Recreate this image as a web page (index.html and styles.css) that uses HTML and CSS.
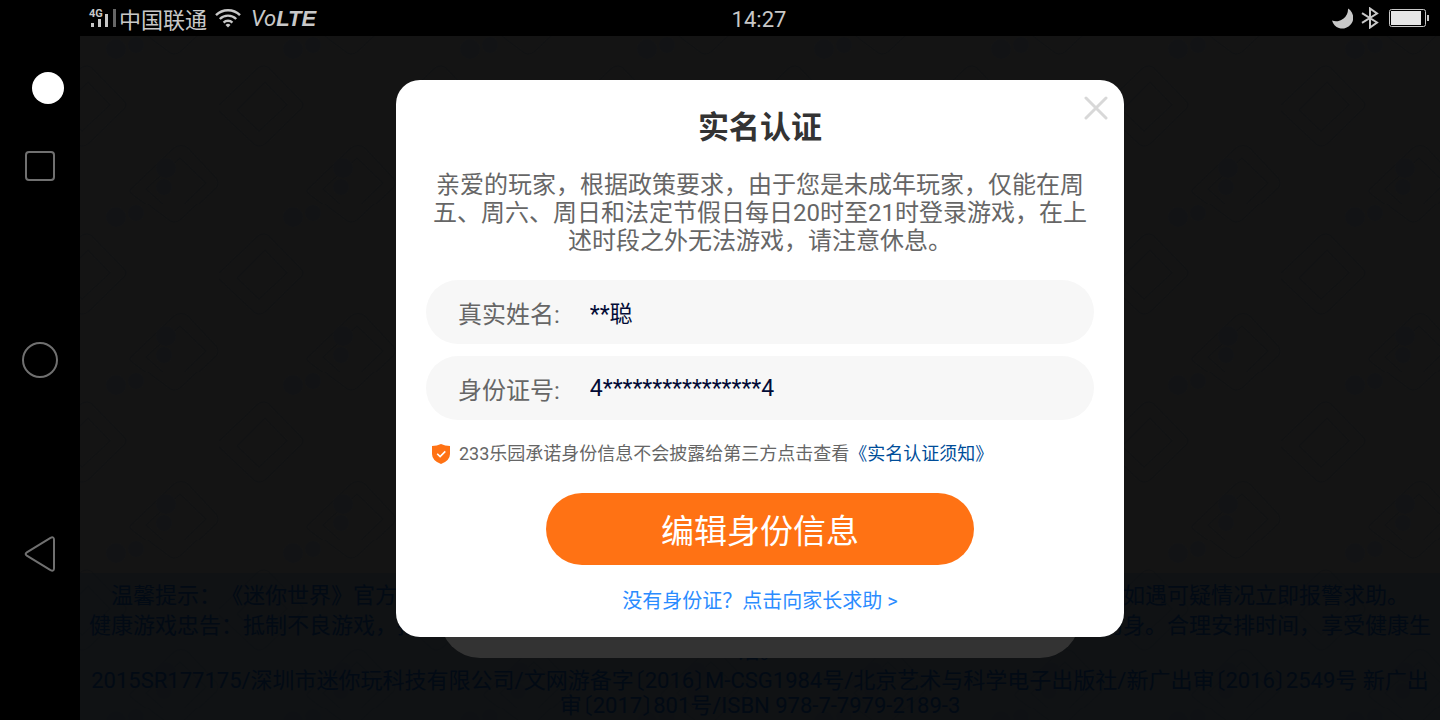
FILE: index.html
```html
<!DOCTYPE html>
<html lang="zh-CN">
<head>
<meta charset="utf-8">
<meta name="viewport" content="width=device-width, initial-scale=1">
<title>实名认证</title>
<link rel="stylesheet" href="styles.css">
</head>
<body>
<header class="status">
  <div class="status-left">
    <svg class="signal" width="30" height="22" viewBox="0 0 30 22" aria-hidden="true">
      <text class="signal-label" x="0" y="8">4G</text>
      <path d="M2 14h3v4H2zM9 10h3v8H9zM16 5h3v13h-3z" fill="#c8c8c8"/>
      <path d="M24 0h3v18h-3z" fill="#666"/>
    </svg>
    <span class="carrier">中国联通</span>
    <svg class="wifi" width="26" height="20" viewBox="0 0 26 20" aria-hidden="true">
      <g fill="none" stroke="#c8c8c8" stroke-width="2.4">
        <path d="M1 7.2a17 17 0 0 1 24 0"/>
        <path d="M4.8 11a11.6 11.6 0 0 1 16.4 0"/>
        <path d="M8.6 14.6a6.2 6.2 0 0 1 8.8 0"/>
      </g>
      <path d="M13 19.6l-2.5-2.6a3.6 3.6 0 0 1 5 0z" fill="#c8c8c8"/>
    </svg>
    <span class="volte">Vo<b>LTE</b></span>
  </div>
  <time class="clock">14:27</time>
  <div class="status-right">
    <svg width="22" height="22" viewBox="0 0 22 22" aria-hidden="true">
      <path d="M17 1.500A10.800 10.800 0 1 1 1 13.600 12 12 0 0 0 17 1.500z" fill="#c8c8c8"/>
    </svg>
    <svg width="18" height="22" viewBox="0 0 18 22" aria-hidden="true">
      <path d="M1 6.200l15 9.300-7 5V1.500l7 5L1 15.800" fill="none" stroke="#c8c8c8" stroke-width="2"/>
    </svg>
    <svg class="battery" width="40" height="18" viewBox="0 0 40 18" aria-hidden="true">
      <rect x=".5" y=".5" width="36" height="17" rx="2" fill="none" stroke="#c8c8c8"/>
      <path d="M2 2h30v14H2z" fill="#e6e6e6"/>
      <path d="M38 6h2v6h-2z" fill="#c8c8c8"/>
    </svg>
  </div>
</header>

<div class="screen">
  <nav class="keys" aria-label="系统导航">
    <span class="dot"></span>
    <button class="key key-recent" type="button" aria-label="最近任务">
      <svg width="36" height="36" viewBox="0 0 36 36"><rect x="4" y="4" width="28" height="28" rx="3"/></svg>
    </button>
    <button class="key key-home" type="button" aria-label="主屏幕">
      <svg width="36" height="36" viewBox="0 0 36 36"><circle cx="18" cy="18" r="17"/></svg>
    </button>
    <button class="key key-back" type="button" aria-label="返回">
      <svg width="36" height="36" viewBox="0 0 36 36"><path d="M4.800 16.400L28.500 1.800q3.500-1.600 3.500 2v28.400q0 3.600-3.500 2L4.800 19.600q-2.300-1.600 0-3.200z"/></svg>
    </button>
  </nav>

  <main class="stage">
    <svg class="pattern" aria-hidden="true">
      <defs>
        <pattern id="tiles" width="177" height="168" patternUnits="userSpaceOnUse">
          <g fill="none" stroke="#111213" stroke-width="1.500">
            <path d="M52 152l42-40q7-5 14 0l28 30q4 5 0 10l-36 34q-6 4-11 0l-37-28q-4-3 0-6z"/>
            <path d="M66 153l34-31 26 25-32 31z"/>
            <path d="M52 -16l42-40M52-12l37 28q5 4 11 0l36-34"/>
            <path d="M-38 69L1 32q6-4 11 0l32 33q4 4 0 8L8 108q-6 4-11 0l-35-33q-3-3 0-6z"/>
            <path d="M139 69l39-37q6-4 11 0M139 75l35 33q5 4 11 0"/>
            <path d="M-20 74L8 46l22 23L2 95z"/>
            <path d="M157 74l28-28M157 74l22 21"/>
          </g>
          <g fill="#121315">
            <circle cx="86" cy="132" r="10"/>
            <circle cx="84" cy="151" r="8"/>
            <circle cx="36" cy="13" r="10"/>
            <circle cx="56" cy="9" r="8"/>
          </g>
        </pattern>
      </defs>
      <rect width="100%" height="100%" fill="url(#tiles)"/>
    </svg>

    <footer class="notice">
      <p>温馨提示：《迷你世界》官方不会以任何形式要求玩家提供账号密码，也不会进行私下交易，谨防诈骗，如遇可疑情况立即报警求助。</p>
      <p>健康游戏忠告：抵制不良游戏，拒绝盗版游戏。注意自我保护，谨防受骗上当。适度游戏益脑，沉迷游戏伤身。合理安排时间，享受健康生活。</p>
      <p class="license">2015SR177175/深圳市迷你玩科技有限公司/文网游备字〔2016〕M-CSG1984号/北京艺术与科学电子出版社/新广出审〔2016〕2549号 新广出审〔2017〕801号/ISBN 978-7-7979-2189-3</p>
    </footer>

    <div class="overlay">
      <div class="under-card"></div>
      <form class="dialog" role="dialog" aria-labelledby="dialog-title">
        <button class="close" type="button" aria-label="关闭">
          <svg width="24" height="24" viewBox="0 0 24 24"><path d="M2 2l20 20M22 2L2 22"/></svg>
        </button>
        <h1 class="title" id="dialog-title">实名认证</h1>
        <p class="message">亲爱的玩家，根据政策要求，由于您是未成年玩家，仅能在周五、周六、周日和法定节假日每日20时至21时登录游戏，在上述时段之外无法游戏，请注意休息。</p>
        <div class="field">
          <label for="name">真实姓名:</label>
          <input id="name" type="text" value="**聪" readonly>
        </div>
        <div class="field">
          <label for="idno">身份证号:</label>
          <input id="idno" type="text" value="4****************4" readonly>
        </div>
        <p class="promise">
          <svg width="18" height="20" viewBox="0 0 18 20" aria-hidden="true">
            <path d="M9 0q4 1.800 9 2v8q0 6.500-9 10Q0 16.500 0 10V2q5-.2 9-2z" fill="#ff7214"/>
            <path d="M5.200 9.700l2.900 2.900 5.200-5.200" fill="none" stroke="#fff" stroke-width="1.600"/>
          </svg>
          <span>233乐园承诺身份信息不会披露给第三方点击查看<a href="#notice">《实名认证须知》</a></span>
        </p>
        <button class="submit" type="submit">编辑身份信息</button>
        <a class="help" href="#help">没有身份证？点击向家长求助 &gt;</a>
      </form>
    </div>
  </main>
</div>
</body>
</html>
```
FILE: styles.css
```css
* {
  box-sizing: border-box;
}

body {
  margin: 0;
  min-height: 100vh;
  display: flex;
  flex-direction: column;
  background: #000;
  font-family: Roboto, "Noto Sans CJK SC", sans-serif;
  text-spacing-trim: space-all;
}

h1,
p {
  margin: 0;
}

button,
input {
  font: inherit;
  border: 0;
  padding: 0;
  background: none;
}

a {
  text-decoration: none;
}

/* Status bar */
.status {
  display: grid;
  grid-template-columns: 1fr auto 1fr;
  align-items: center;
  height: 36px;
  padding: 0 11px 0 89px;
  color: #c8c8c8;
  font-size: 22px;
}

.status-left,
.status-right {
  display: flex;
  align-items: center;
}

.signal {
  margin-top: 4px;
  overflow: visible;
}

.signal-label {
  font: bold 11px Roboto, sans-serif;
  fill: #c8c8c8;
}

.wifi {
  margin-left: 8px;
}

.volte {
  margin-left: 10px;
  padding-top: 2px;
  font-style: italic;
}

.volte b {
  font-family: "Liberation Sans", sans-serif;
}

.clock {
  padding-top: 2px;
}

.status-right {
  justify-content: flex-end;
  gap: 8px;
}

.battery {
  margin-left: 2px;
}

/* System keys */
.screen {
  flex: 1;
  display: flex;
}

.keys {
  width: 80px;
  display: flex;
  flex-direction: column;
  align-items: center;
  padding-top: 36px;
}

.dot {
  width: 32px;
  height: 32px;
  margin-left: 16px;
  border-radius: 50%;
  background: #fff;
}

.key {
  width: 36px;
  height: 36px;
}

.key svg {
  display: block;
  fill: none;
  stroke: #707070;
  stroke-width: 2;
}

.key-recent {
  margin-top: 44px;
}

.key-home,
.key-back {
  margin-top: 158px;
}

/* Game page */
.stage {
  flex: 1;
  min-width: 0;
  position: relative;
  display: flex;
  flex-direction: column;
  justify-content: flex-end;
  background: #141414;
}

.pattern {
  position: absolute;
  inset: 0;
  width: 100%;
  height: 100%;
}

.notice {
  position: relative;
  display: flex;
  flex-direction: column;
  gap: 5px;
  padding: 10px 8px 2px;
  background: rgba(12, 16, 20, 0.5);
  color: #020a14;
  font-size: 22px;
  line-height: 25px;
  text-align: center;
}

.license {
  font-feature-settings: "halt";
}

/* Dialog */
.overlay {
  position: absolute;
  inset: 0;
  display: flex;
  justify-content: center;
  align-items: flex-start;
  padding: 44px 24px 24px;
}

.under-card {
  position: absolute;
  bottom: 62px;
  width: 640px;
  height: 120px;
  border-radius: 40px;
  background: #333;
}

.dialog {
  position: relative;
  width: 100%;
  max-width: 728px;
  display: flex;
  flex-direction: column;
  align-items: center;
  padding: 26px 30px 23px;
  border-radius: 24px;
  background: #fff;
}

.close {
  position: absolute;
  top: 16px;
  right: 16px;
  width: 24px;
  height: 24px;
}

.close svg {
  display: block;
  fill: none;
  stroke: #d8d8d8;
  stroke-width: 3;
  stroke-linecap: round;
}

.title {
  color: #333;
  font-size: 31px;
  font-weight: 700;
  line-height: 44px;
}

.message {
  margin: 21px 0 25px;
  color: #666;
  font-size: 24px;
  line-height: 28px;
  text-align: center;
}

.field {
  width: 100%;
  height: 64px;
  display: flex;
  align-items: center;
  gap: 30px;
  padding: 0 32px;
  border-radius: 32px;
  background: #f7f7f7;
  color: #666;
  font-size: 24px;
}

.field + .field {
  margin-top: 12px;
}

.field input {
  flex: 1;
  min-width: 0;
  color: #030c36;
  font-size: 23px;
}

.promise {
  align-self: stretch;
  display: flex;
  align-items: center;
  gap: 9px;
  margin: 20px 0 25px;
  padding-left: 6px;
  color: #666;
  font-size: 18px;
  line-height: 28px;
}

.promise a {
  color: #004d99;
}

.submit {
  width: 100%;
  max-width: 428px;
  height: 72px;
  border-radius: 36px;
  background: #ff7214;
  color: #fff;
  font-size: 33px;
}

.help {
  margin-top: 23px;
  color: #2b8cff;
  font-size: 20px;
  line-height: 26px;
}
```
